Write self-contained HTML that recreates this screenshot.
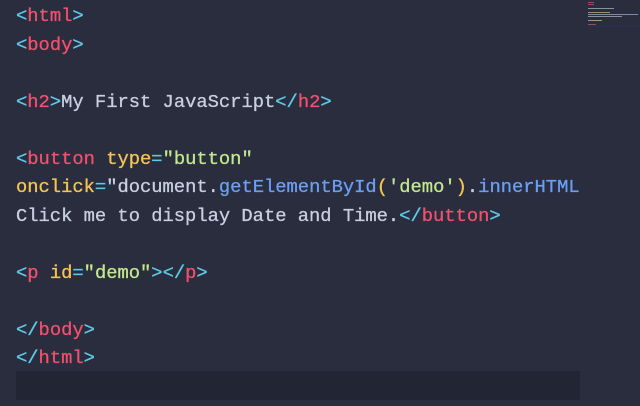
<!DOCTYPE html>
<html><head><style>
body{margin:0;width:640px;height:406px;background:#292d3e;overflow:hidden;position:relative}
pre{margin:0;position:absolute;left:16px;top:2px;font-family:"Liberation Mono",monospace;font-size:18.8px;line-height:28.5px;color:#c8d0e0;width:564px;overflow:hidden;white-space:pre;-webkit-text-stroke:0.3px currentColor}
.hl{position:absolute;left:16px;top:371px;width:564px;height:29px;background:#222533}
.b{color:#5fc9e8}.t{color:#f2506c}.a{color:#f6c453}.s{color:#c3e88d}.f{color:#6b9ff5}
.mm{position:absolute;left:588px;top:0;width:52px;height:30px}
.mm i{position:absolute;height:1px;display:block}
</style></head><body>
<div class="hl"></div>
<pre><span class="b">&lt;</span><span class="t">html</span><span class="b">&gt;</span>
<span class="b">&lt;</span><span class="t">body</span><span class="b">&gt;</span>

<span class="b">&lt;</span><span class="t">h2</span><span class="b">&gt;</span>My First JavaScript<span class="b">&lt;/</span><span class="t">h2</span><span class="b">&gt;</span>

<span class="b">&lt;</span><span class="t">button</span> <span class="a">type</span><span class="b">=</span><span class="s">"button"</span>
<span class="a">onclick</span><span class="b">=</span>"document.<span class="f">getElementById</span><span class="a">(</span><span class="s">'demo'</span><span class="a">)</span>.<span class="f">innerHTML</span> = Date()"&gt;
Click me to display Date and Time.<span class="b">&lt;/</span><span class="t">button</span><span class="b">&gt;</span>

<span class="b">&lt;</span><span class="t">p</span> <span class="a">id</span><span class="b">=</span><span class="s">"demo"</span><span class="b">&gt;&lt;/</span><span class="t">p</span><span class="b">&gt;</span>

<span class="b">&lt;/</span><span class="t">body</span><span class="b">&gt;</span>
<span class="b">&lt;/</span><span class="t">html</span><span class="b">&gt;</span>
</pre>
<div class="mm">
<i style="top:2px;left:0;width:6px;background:#a04860"></i>
<i style="top:4px;left:0;width:6px;background:#a04860"></i>
<i style="top:8px;left:0;width:26px;background:#8a8fa0"></i>
<i style="top:12px;left:0;width:22px;background:#a09060"></i>
<i style="top:14px;left:0;width:50px;background:#7f8aa8"></i>
<i style="top:16px;left:0;width:34px;background:#8a8fa0"></i>
<i style="top:20px;left:0;width:14px;background:#90a070"></i>
<i style="top:24px;left:0;width:8px;background:#a04860"></i>
<i style="top:26px;left:0;width:52px;background:#24325a"></i>
</div>
</body></html>
